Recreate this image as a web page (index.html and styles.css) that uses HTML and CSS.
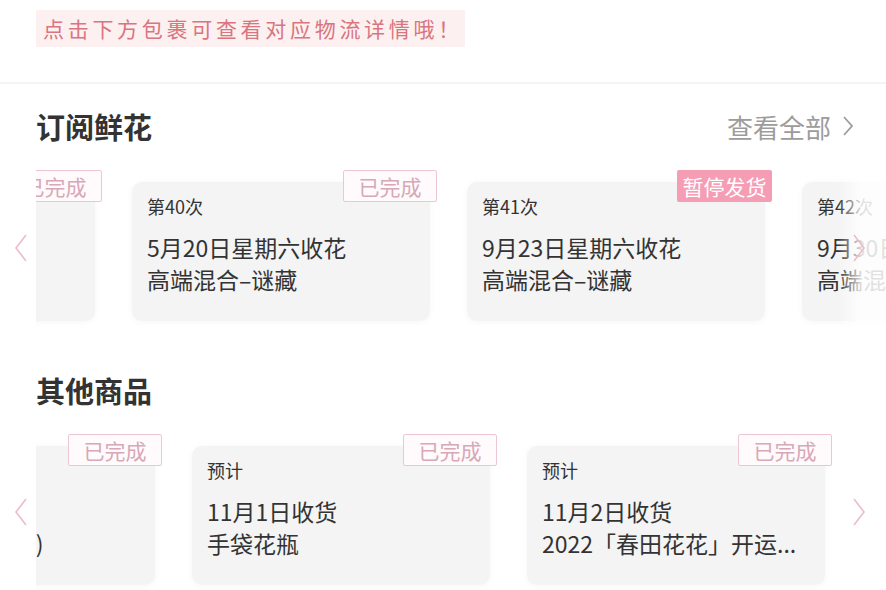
FILE: index.html
```html
<!DOCTYPE html>
<html lang="zh-CN">
<head>
    <meta charset="UTF-8">
    <meta name="viewport" content="width=device-width, initial-scale=1.0">
    <title>我的包裹</title>
    <link rel="stylesheet" href="styles.css">
</head>
<body>
    <div class="banner">点击下方包裹可查看对应物流详情哦！</div>
    <div class="divider"></div>

    <div class="section-head">
        <h2>订阅鲜花</h2>
        <a class="more" href="#">查看全部
            <svg width="14" height="22" viewBox="0 0 14 22"><path d="M3 2 L11 11 L3 20" fill="none" stroke="#9c9c9c" stroke-width="1.8"/></svg>
        </a>
    </div>

    <div class="carousel">
        <svg class="arrow arrow-left" width="14" height="28" viewBox="0 0 14 28"><path d="M12 1 L2 14 L12 27" fill="none" stroke="#ecbccb" stroke-width="1.6"/></svg>
        <div class="viewport">
            <div class="track track-flower">
                <div class="card">
                    <span class="badge">已完成</span>
                    <div class="sub">第39次</div>
                    <div class="line">5月13日星期六收花</div>
                    <div class="line">高端混合–谜藏</div>
                </div>
                <div class="card">
                    <span class="badge">已完成</span>
                    <div class="sub">第40次</div>
                    <div class="line">5月20日星期六收花</div>
                    <div class="line">高端混合–谜藏</div>
                </div>
                <div class="card">
                    <span class="badge badge-pause">暂停发货</span>
                    <div class="sub">第41次</div>
                    <div class="line">9月23日星期六收花</div>
                    <div class="line">高端混合–谜藏</div>
                </div>
                <div class="card">
                    <div class="sub">第42次</div>
                    <div class="line">9月30日星期六收花</div>
                    <div class="line">高端混合–谜藏</div>
                </div>
            </div>
            <div class="fade"></div>
        </div>
        <svg class="arrow arrow-right" width="14" height="28" viewBox="0 0 14 28"><path d="M2 1 L12 14 L2 27" fill="none" stroke="#ecbccb" stroke-width="1.6"/></svg>
    </div>

    <div class="section-head section-other">
        <h2>其他商品</h2>
    </div>

    <div class="carousel">
        <svg class="arrow arrow-left" width="14" height="28" viewBox="0 0 14 28"><path d="M12 1 L2 14 L12 27" fill="none" stroke="#ecbccb" stroke-width="1.6"/></svg>
        <div class="viewport">
            <div class="track track-goods">
                <div class="card">
                    <span class="badge">已完成</span>
                    <div class="sub">预计</div>
                    <div class="line">10月28日收货</div>
                    <div class="line">2号 花艺礼盒(粉)</div>
                </div>
                <div class="card">
                    <span class="badge">已完成</span>
                    <div class="sub">预计</div>
                    <div class="line">11月1日收货</div>
                    <div class="line">手袋花瓶</div>
                </div>
                <div class="card">
                    <span class="badge">已完成</span>
                    <div class="sub">预计</div>
                    <div class="line">11月2日收货</div>
                    <div class="line">2022「春田花花」开运...</div>
                </div>
            </div>
        </div>
        <svg class="arrow arrow-right" width="14" height="28" viewBox="0 0 14 28"><path d="M2 1 L12 14 L2 27" fill="none" stroke="#ecbccb" stroke-width="1.6"/></svg>
    </div>
</body>
</html>
```

FILE: styles.css
```css
body {
    margin: 0;
    padding-top: 10px;
    background: #fff;
    font-family: "Noto Sans CJK SC", "Noto Sans", sans-serif;
    color: #333;
}
.banner {
    display: inline-block;
    margin-left: 36px;
    height: 37px;
    line-height: 37px;
    padding: 0 2px 0 7px;
    background: #fdf0f0;
    color: #d8757f;
    font-size: 21px;
    letter-spacing: 3.7px;
}
.divider {
    margin-top: 35px;
    height: 2px;
    background: #f4f4f4;
}
.section-head {
    display: flex;
    justify-content: space-between;
    align-items: center;
    padding: 0 31px 0 36px;
    margin-top: 22px;
    height: 40px;
}
.section-head h2 {
    margin: 0;
    font-size: 29px;
    font-weight: 700;
    color: #333;
}
.section-other {
    margin-top: 43px;
}
.more {
    display: flex;
    align-items: center;
    gap: 10px;
    color: #9c9c9c;
    font-size: 26px;
    text-decoration: none;
}
.carousel {
    position: relative;
    margin-top: 24px;
}
.viewport {
    position: relative;
    margin-left: 36px;
    padding: 12px 0 6px;
    overflow: hidden;
}
.track {
    display: flex;
    gap: 37px;
}
.track-flower {
    margin-left: -239px;
}
.track-goods {
    margin-left: -179px;
}
.card {
    position: relative;
    flex: 0 0 298px;
    height: 139px;
    box-sizing: border-box;
    padding: 12px 15px;
    background: #f4f4f4;
    border-radius: 10px;
    box-shadow: 0 1px 7px rgba(0, 0, 0, 0.04);
}
.badge {
    position: absolute;
    top: -12px;
    right: -7px;
    width: 94px;
    height: 32px;
    box-sizing: border-box;
    border: 1px solid #ecc7d3;
    border-radius: 2px;
    background: #fffafb;
    color: #d7a8b8;
    font-size: 21px;
    line-height: 30px;
    text-align: center;
}
.badge-pause {
    width: 95px;
    border: none;
    background: #f59db4;
    color: #fff;
    line-height: 32px;
}
.sub {
    font-size: 18px;
    line-height: 24px;
    color: #333;
}
.line {
    font-size: 23px;
    line-height: 32px;
    color: #333;
    white-space: nowrap;
}
.sub + .line {
    margin-top: 13px;
}
.fade {
    position: absolute;
    top: 0;
    right: 0;
    bottom: 0;
    width: 48px;
    background: linear-gradient(to right, rgba(255, 255, 255, 0), rgba(255, 255, 255, 0.85) 50%);
}
.arrow {
    position: absolute;
    top: 64px;
}
.arrow-left {
    left: 14px;
}
.arrow-right {
    right: 20px;
}
```
